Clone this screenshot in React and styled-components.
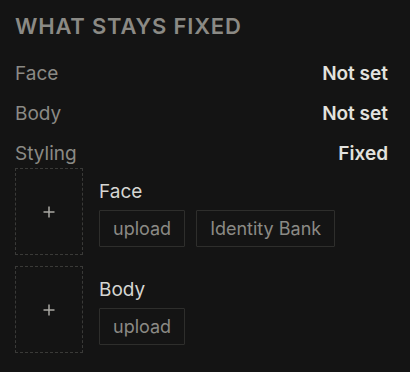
import React from 'react';
import styled, { createGlobalStyle } from 'styled-components';

const Global = createGlobalStyle`
  html, body {
    margin: 0;
    background: #141414;
  }
  body {
    font-family: Inter, "Noto Sans", sans-serif;
  }
`;

const Panel = styled.div`
  width: 410px;
  height: 372px;
  box-sizing: border-box;
  padding: 13px 22px 0 15px;
  background: #141414;
`;

const Title = styled.h2`
  margin: 0 0 14px;
  font-size: 22px;
  line-height: 26px;
  font-weight: 600;
  letter-spacing: 0.8px;
  color: #8b8a85;
`;

const Rows = styled.div`
  display: flex;
  flex-direction: column;
`;

const Row = styled.div`
  display: flex;
  justify-content: space-between;
  align-items: center;
  height: 40px;
  font-size: 19px;
`;

const Label = styled.span`
  color: #8b8a85;
`;

const Value = styled.span`
  color: #e2e2de;
  font-weight: 600;
`;

const Items = styled.div`
  display: flex;
  flex-direction: column;
  gap: 11px;
  margin-top: -5px;
`;

const Item = styled.div`
  display: flex;
  align-items: center;
  gap: 16px;
`;

const Drop = styled.div`
  width: 68px;
  height: 87px;
  box-sizing: border-box;
  border: 1px dashed #3a3a38;
  display: flex;
  align-items: center;
  justify-content: center;
  color: #a9a8a3;
`;

const Info = styled.div`
  display: flex;
  flex-direction: column;
  gap: 6px;
  padding-top: 4px;
`;

const Name = styled.div`
  font-size: 19px;
  line-height: 24px;
  color: #d6d6d2;
`;

const Actions = styled.div`
  display: flex;
  gap: 11px;
`;

const Chip = styled.button`
  height: 37px;
  box-sizing: border-box;
  padding: 0 13px;
  background: transparent;
  border: 1px solid #2e2e2c;
  border-radius: 1px;
  font-family: inherit;
  font-size: 18px;
  color: #8b8a85;
`;

const Plus = () => (
  <svg width="12" height="12" viewBox="0 0 12 12">
    <path d="M6 0.5v11M0.5 6h11" stroke="currentColor" strokeWidth="1.5" fill="none" />
  </svg>
);

const items = [
  { name: 'Face', actions: ['upload', 'Identity Bank'] },
  { name: 'Body', actions: ['upload'] },
];

export default function App() {
  return (
    <Panel>
      <Global />
      <Title>WHAT STAYS FIXED</Title>
      <Rows>
        <Row><Label>Face</Label><Value>Not set</Value></Row>
        <Row><Label>Body</Label><Value>Not set</Value></Row>
        <Row><Label>Styling</Label><Value>Fixed</Value></Row>
      </Rows>
      <Items>
        {items.map((it) => (
          <Item key={it.name}>
            <Drop><Plus /></Drop>
            <Info>
              <Name>{it.name}</Name>
              <Actions>
                {it.actions.map((a) => <Chip key={a}>{a}</Chip>)}
              </Actions>
            </Info>
          </Item>
        ))}
      </Items>
    </Panel>
  );
}
